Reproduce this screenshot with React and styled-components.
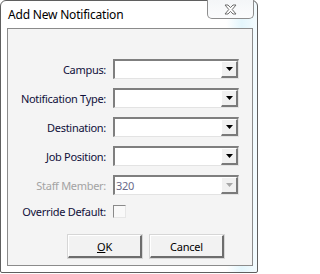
import React from 'react'
import styled, { createGlobalStyle } from 'styled-components'

const GlobalStyle = createGlobalStyle`
  html, body {
    margin: 0;
    padding: 0;
    background: #ffffff;
  }
`

const Window = styled.div`
  box-sizing: border-box;
  width: 258px;
  height: 273px;
  display: flex;
  flex-direction: column;
  border: 1px solid #5f5f5f;
  border-radius: 6px 6px 2px 2px;
  background: linear-gradient(90deg, #ffffff 0%, #ffffff 88%, #e4f6fc 94%, #f4fbfe 100%);
  font-family: 'Noto Sans', 'Liberation Sans', sans-serif;
`

const TitleBar = styled.div`
  height: 27px;
  display: flex;
  align-items: flex-start;
  justify-content: space-between;
  padding-left: 7px;
`

const Title = styled.div`
  margin-top: 5px;
  font-size: 12px;
  letter-spacing: -0.2px;
  color: #000000;
`

const CloseButton = styled.div`
  box-sizing: border-box;
  width: 47px;
  height: 19px;
  margin-top: -1px;
  margin-right: 3px;
  display: flex;
  align-items: center;
  justify-content: center;
  border: 1px solid #8e8e8e;
  border-top: none;
  border-radius: 0 0 5px 5px;
  background: linear-gradient(180deg, #f4f6f8 0%, #fbfcfd 100%);
`

const Panel = styled.div`
  box-sizing: border-box;
  margin: 0 4px 0 6px;
  height: 238px;
  border: 1px solid #8b8b8b;
  background: #f4f4f4;
  display: flex;
  flex-direction: column;
  padding: 30px 0 7px 0;
`

const Form = styled.div`
  display: grid;
  grid-template-columns: 98px 126px;
  column-gap: 7px;
  row-gap: 9px;
  align-items: center;
`

const Label = styled.div`
  text-align: right;
  font-size: 11px;
  letter-spacing: -0.3px;
  white-space: nowrap;
  color: ${(p) => (p.$disabled ? '#a3a3a3' : '#10103a')};
`

const Combo = styled.div`
  box-sizing: border-box;
  height: 20px;
  display: flex;
  border-top: 2px solid #7f7f7f;
  border-left: 2px solid #7f7f7f;
  border-right: 1px solid #e3e3e3;
  border-bottom: 1px solid #e3e3e3;
  background: #ffffff;
`

const ComboText = styled.div`
  flex: 1;
  font-size: 11px;
  letter-spacing: -0.3px;
  line-height: 17px;
  color: #6a6a8a;
  padding-left: 1px;
`

const DropButton = styled.div`
  box-sizing: border-box;
  width: 17px;
  display: flex;
  align-items: center;
  justify-content: center;
  background: #f1f1f1;
  border-top: 1px solid #ffffff;
  border-left: 1px solid #ffffff;
  border-right: 2px solid #7a7a7a;
  border-bottom: 2px solid #7a7a7a;
`

const CheckBox = styled.div`
  box-sizing: border-box;
  width: 13px;
  height: 13px;
  border-top: 1px solid #8a8a8a;
  border-left: 1px solid #8a8a8a;
  border-right: 1px solid #e6e6e6;
  border-bottom: 1px solid #e6e6e6;
  background: #f9f9f9;
`

const ButtonRow = styled.div`
  margin-top: auto;
  display: flex;
  gap: 8px;
  padding-left: 60px;
`

const Button = styled.div`
  box-sizing: border-box;
  width: ${(p) => p.$width}px;
  height: 23px;
  display: flex;
  align-items: center;
  justify-content: center;
  font-size: 11px;
  letter-spacing: -0.2px;
  color: #000000;
  background: #f2f2f2;
  border-top: 1px solid #ffffff;
  border-left: 1px solid #ffffff;
  border-right: 2px solid #6d6d6d;
  border-bottom: 2px solid #6d6d6d;
  outline: 1px solid #d6d6d6;
`

const Arrow = ({ disabled }) => (
  <svg width="7" height="4" viewBox="0 0 7 4">
    <path d="M0 0h7L3.5 4z" fill={disabled ? '#a8a8a8' : '#000000'} />
  </svg>
)

const CloseGlyph = () => (
  <svg width="13" height="11" viewBox="0 0 13 11">
    <path
      d="M1 1h3l2.5 2.6L9 1h3L8.2 5.5 12 10H9L6.5 7.4 4 10H1l3.8-4.5z"
      fill="#ffffff"
      stroke="#6c6c6c"
      strokeWidth="1"
      strokeLinejoin="round"
    />
  </svg>
)

const ComboField = ({ value, disabled }) => (
  <Combo>
    <ComboText>{value}</ComboText>
    <DropButton>
      <Arrow disabled={disabled} />
    </DropButton>
  </Combo>
)

const fields = [
  { label: 'Campus:' },
  { label: 'Notification Type:' },
  { label: 'Destination:' },
  { label: 'Job Position:' },
  { label: 'Staff Member:', value: '320', disabled: true }
]

export default function App() {
  return (
    <>
      <GlobalStyle />
      <Window>
        <TitleBar>
          <Title>Add New Notification</Title>
          <CloseButton>
            <CloseGlyph />
          </CloseButton>
        </TitleBar>
        <Panel>
          <Form>
            {fields.map((f) => (
              <React.Fragment key={f.label}>
                <Label $disabled={f.disabled}>{f.label}</Label>
                <ComboField value={f.value} disabled={f.disabled} />
              </React.Fragment>
            ))}
            <Label>Override Default:</Label>
            <CheckBox />
          </Form>
          <ButtonRow>
            <Button $width={74}>
              <u>O</u>K
            </Button>
            <Button $width={74}>Cancel</Button>
          </ButtonRow>
        </Panel>
      </Window>
    </>
  )
}
